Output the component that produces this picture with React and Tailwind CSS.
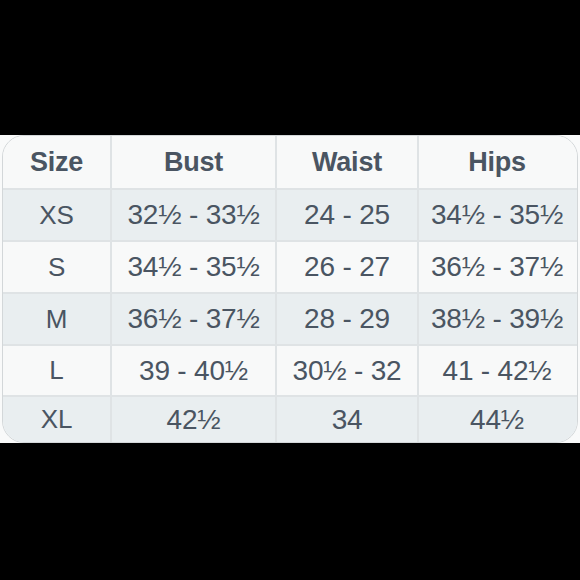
import React from "react";

const rows = [
  { size: "XS", bust: "32½ - 33½", waist: "24 - 25", hips: "34½ - 35½", h: "h-[52px]", bg: "bg-[#e9eef0]" },
  { size: "S", bust: "34½ - 35½", waist: "26 - 27", hips: "36½ - 37½", h: "h-[52px]", bg: "bg-[#f8f9f9]" },
  { size: "M", bust: "36½ - 37½", waist: "28 - 29", hips: "38½ - 39½", h: "h-[52px]", bg: "bg-[#e9eef0]" },
  { size: "L", bust: "39 - 40½", waist: "30½ - 32", hips: "41 - 42½", h: "h-[51px]", bg: "bg-[#f8f9f9]" },
  { size: "XL", bust: "42½", waist: "34", hips: "44½", h: "h-[47px]", bg: "bg-[#e9eef0]" },
];

const cols = "grid grid-cols-[107px_165px_142px_158px]";

const Cell = ({ children, first, head }) => (
  <div
    className={`flex items-center justify-center ${first ? "text-[26px]" : ""} ${first ? "" : "border-l-2 border-[#dfe3e5]"} ${head ? "font-bold text-[27px]" : "font-normal"}`}
  >
    {children}
  </div>
);

const App = () => {
  return (
    <div
      className="w-[580px] h-[580px] bg-black flex flex-col text-[#4a5562]"
      style={{ fontFamily: '"Liberation Sans", Arial, sans-serif' }}
    >
      <div className="h-[135px] shrink-0" />
      <div className="h-[308px] shrink-0 bg-[#f9fafa] px-[2px]">
        <div className="h-full rounded-[22px] border border-[#d3d7d9] overflow-hidden text-[28px] tracking-[-0.2px]">
          <div className={`${cols} h-[52px] bg-[#f8f9f9]`}>
            <Cell first head>Size</Cell>
            <Cell head>Bust</Cell>
            <Cell head>Waist</Cell>
            <Cell head>Hips</Cell>
          </div>
          {rows.map((r) => (
            <div key={r.size} className={`${cols} ${r.h} ${r.bg} border-t-2 border-[#dfe3e5]`}>
              <Cell first>{r.size}</Cell>
              <Cell>{r.bust}</Cell>
              <Cell>{r.waist}</Cell>
              <Cell>{r.hips}</Cell>
            </div>
          ))}
        </div>
      </div>
    </div>
  );
};

export default App;
